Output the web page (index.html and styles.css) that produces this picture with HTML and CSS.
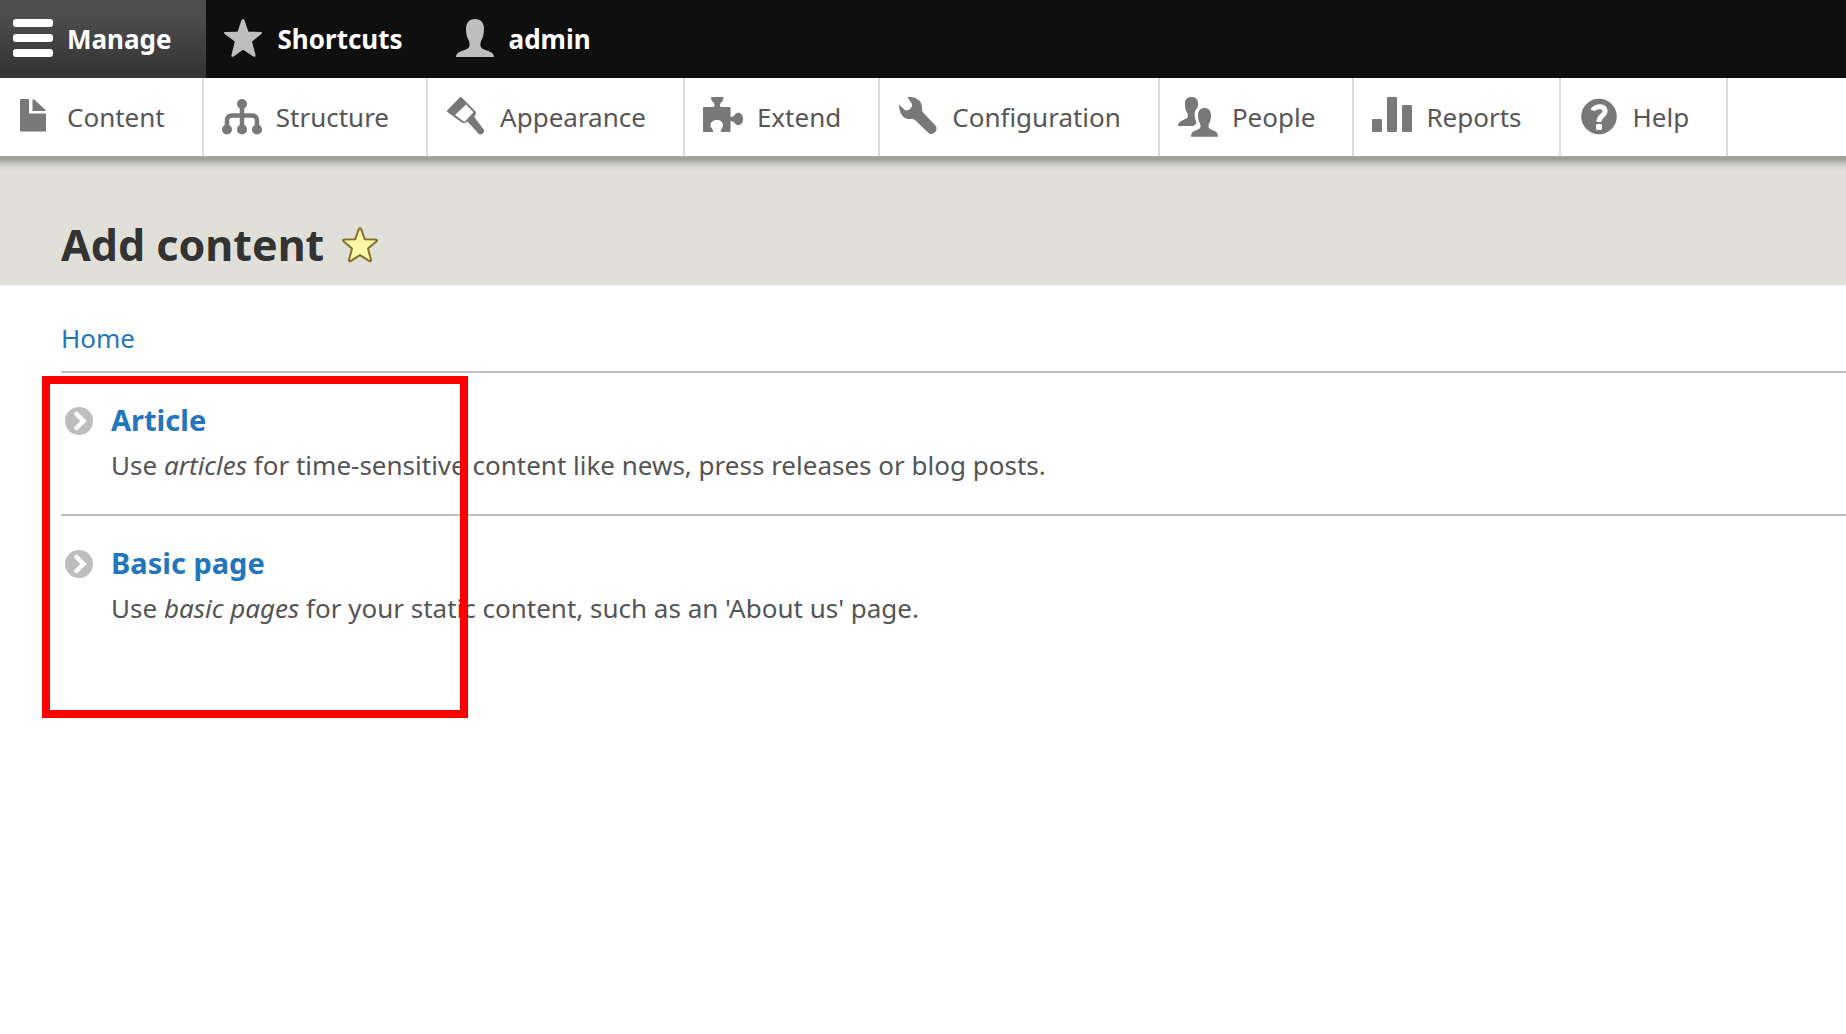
FILE: index.html
```html
<!DOCTYPE html>
<html lang="en">
<head>
<meta charset="utf-8">
<meta name="viewport" content="width=device-width, initial-scale=1">
<title>Add content</title>
<link rel="stylesheet" href="styles.css">
</head>
<body>
<nav class="toolbar-bar" aria-label="Administration toolbar">
  <a class="tab tab-first tab-active" href="#manage">
    <svg class="icon" viewBox="0 0 40 40" aria-hidden="true"><g fill="#fff"><rect y="1" width="40" height="8" rx="3"/><rect y="16" width="40" height="8" rx="3"/><rect y="31" width="40" height="8" rx="3"/></g></svg>
    <span>Manage</span>
  </a>
  <a class="tab" href="#shortcuts">
    <svg class="icon" viewBox="0 0 40 40" aria-hidden="true"><path fill="#bebebe" d="M19 1c.9 0 1.400.8 1.800 2l3.600 10.800 12.200.1c1.600 0 1.900 1.100.7 2.100L28 23.600l3.400 12.900c.5 1.900-.4 2.900-2 1.900L19 31.700l-9.400 6.700c-1.600 1-2.500 0-2-1.900L10.800 23.600 .7 16c-1.200-1-.9-2.100.7-2.100l12.200-.1L17.200 3c.4-1.200.9-2 1.800-2z"/></svg>
    <span>Shortcuts</span>
  </a>
  <a class="tab" href="#user">
    <svg class="icon" viewBox="0 0 40 40" aria-hidden="true"><path fill="#bebebe" d="M20 1c6 0 9 4 9 10 0 5-1 9-3 12-1 4-1 6 2 8 5 2 11 3 11 8H1c0-5 6-6 11-8 3-2 3-4 2-8-2-3-3-7-3-12 0-6 3-10 9-10z"/></svg>
    <span>admin</span>
  </a>
</nav>
<nav class="tray" aria-label="Administration menu">
  <a class="item item-first" href="#content">
    <svg class="icon" viewBox="0 0 40 40" aria-hidden="true"><path fill="#787878" d="M8 3h8v14.500h17V34.500a1 1 0 0 1-1 1H8a1 1 0 0 1-1-1V4a1 1 0 0 1 1-1z"/><path fill="#787878" d="M19.500 3.500v11.500h13c.5-.5.3-.8 0-1.100L21.500 3.800c-.7-.6-1.500-.8-2-.3z"/></svg>
    <span>Content</span>
  </a>
  <a class="item" href="#structure">
    <svg class="icon" viewBox="0 0 40 40" aria-hidden="true"><path fill="none" stroke="#787878" stroke-width="4.500" d="M20 8v25M5 33v-8q0-5.500 5-5.500h20q5 0 5 5.500v8"/><g fill="#787878"><circle cx="20" cy="8" r="5"/><circle cx="5" cy="33.500" r="5"/><circle cx="20" cy="33.500" r="5"/><circle cx="35" cy="33.500" r="5"/></g></svg>
    <span>Structure</span>
  </a>
  <a class="item" href="#appearance">
    <svg class="icon" viewBox="0 0 40 40" aria-hidden="true"><path fill="#787878" d="M15.500 1.200 29.500 15.500c1 1.600.4 3-1.200 5.600L38 34c1 2.500-2.500 5.500-5.200 4L21.500 25.500c-2 1.500-3.800 2-5.700 1L1.300 16c-.5-.6-.4-1.400.2-2L14 1.200c.5-.4 1-.4 1.500 0zM20 8.500 9 19l9.500 7L27.500 16.200z"/></svg>
    <span>Appearance</span>
  </a>
  <a class="item" href="#extend">
    <svg class="icon" viewBox="0 0 40 40" aria-hidden="true"><path fill="#787878" d="M8.500 1h11.500c1 1.500.5 2.500-1 4.500-2 2-2.500 3-1.500 5.500h9c.6 0 1 .4 1 1v8.500c2 .5 3 0 4.500-2 3-3.500 8-1.500 8 4.500s-5 8-8 4.500c-1.500-2-2.500-2.500-4.500-2V35c0 .6-.4 1-1 1H18c-1-3 2-3.500 2-6.500 0-3.500-2.500-5.500-6-5.500s-6.500 2-6.500 5.500c0 3 3.500 3.500 2.500 6.500H1c-.6 0-1-.4-1-1V12c0-.6.400-1 1-1h10c1-2.500.5-3.500-1.500-5.500C8 3.500 7.500 2.500 8.500 1z"/></svg>
    <span>Extend</span>
  </a>
  <a class="item" href="#configuration">
    <svg class="icon" viewBox="0 0 40 40" aria-hidden="true"><path fill="#787878" d="M9.500 1.300C15 0 24 3 24 11.500c0 2.500 0 4 1.500 5.500l12 12.500c3.500 4-2 11-7 7.500L17 24c-2-1.500-3.500-1-6-1C5 23 1 17 1 8.500l5.500 5.300c3.500 2 8-1.500 7.500-5.800z"/></svg>
    <span>Configuration</span>
  </a>
  <a class="item" href="#people">
    <svg class="icon" viewBox="0 0 40 40" aria-hidden="true"><path fill="#787878" d="M13.500 1c4.500 0 6.500 2.500 6.500 6.500 0 2 0 3.200-.7 4.500-2.500 2-3.500 6-2 11 .5 2 1.500 3 .7 5.200L15 30H0c.3-5.500 5.500-5.500 9-8 1.500-1.200.8-4-.2-6C7 13 7 11 7 7.500 7 3.500 9 1 13.500 1z"/><path fill="#787878" d="M26.500 12c4.500 0 6.500 3 6.500 7.500 0 3.500-.8 6-2 8-.7 2.500-1 4 .8 5.200C35 35 40 34.500 40 40.800H13c0-6.300 5-5.800 8.200-8.100 1.800-1.200 1.500-2.700.8-5.200-1.200-2-2-4.500-2-8 0-4.500 2-7.500 6.500-7.500z"/></svg>
    <span>People</span>
  </a>
  <a class="item" href="#reports">
    <svg class="icon" viewBox="0 0 40 40" aria-hidden="true"><g fill="#787878"><rect y="23" width="10" height="13" rx="1"/><rect x="15" y="1" width="10" height="35" rx="1"/><rect x="30" y="9" width="10" height="27" rx="1"/></g></svg>
    <span>Reports</span>
  </a>
  <a class="item" href="#help">
    <svg class="icon" viewBox="0 0 40 40" aria-hidden="true"><circle cx="20" cy="20.500" r="17.800" fill="#787878"/><path fill="none" stroke="#fff" stroke-width="5" d="M14 14.500c1-4 12-6 12 .5 0 5-6 4.500-6 11"/><rect x="17" y="28" width="6" height="6" rx="1.500" fill="#fff"/></svg>
    <span>Help</span>
  </a>
</nav>
<header class="page-header">
  <h1>Add content</h1>
  <a class="shortcut" href="#add-shortcut" aria-label="Add to shortcuts">
    <svg viewBox="0 0 36 36" aria-hidden="true"><path fill="#fdf8a5" stroke="#83702b" stroke-width="2" stroke-linejoin="round" d="M18 1.200c.6 0 1 .6 1.300 1.500l3.500 9.500 10.800.4c1.600.1 1.900 1 .7 2L26 21.400l2.900 11c.4 1.700-.5 2.400-1.900 1.500l-9-5.700-9 5.700c-1.400.9-2.300.2-1.900-1.500l2.900-11-8.300-6.800c-1.200-1-.9-1.900.7-2l10.800-.4 3.500-9.500c.3-.9.7-1.500 1.300-1.500z"/></svg>
  </a>
</header>
<main class="page">
  <nav class="breadcrumb" aria-label="Breadcrumb"><a href="#home">Home</a></nav>
  <ul class="types">
    <li>
      <svg class="bullet" viewBox="0 0 28 28" aria-hidden="true"><circle cx="14" cy="14" r="14" fill="#bebebe"/><path d="m11.500 7 7 7-7 7" fill="none" stroke="#fff" stroke-width="4.500" stroke-linecap="round"/></svg>
      <div>
        <a class="type-name" href="#article">Article</a>
        <p>Use <em>articles</em> for time-sensitive content like news, press releases or blog posts.</p>
      </div>
    </li>
    <li>
      <svg class="bullet" viewBox="0 0 28 28" aria-hidden="true"><circle cx="14" cy="14" r="14" fill="#bebebe"/><path d="m11.500 7 7 7-7 7" fill="none" stroke="#fff" stroke-width="4.500" stroke-linecap="round"/></svg>
      <div>
        <a class="type-name" href="#page">Basic page</a>
        <p>Use <em>basic pages</em> for your static content, such as an 'About us' page.</p>
      </div>
    </li>
  </ul>
  <div class="callout"></div>
</main>
</body>
</html>
```

FILE: styles.css
```css
* {
  box-sizing: border-box;
}

body {
  display: flex;
  flex-direction: column;
  min-height: 100vh;
  margin: 0;
  background: #fff;
  color: #545454;
  font-family: "Noto Sans", "Lucida Grande", sans-serif;
  font-size: 26px;
  line-height: 36px;
}

a {
  color: #2376bd;
  text-decoration: none;
}

.icon {
  flex: none;
  width: 40px;
  height: 40px;
  overflow: visible;
}

.toolbar-bar {
  display: flex;
  height: 78px;
  background: #0f0f0f;
}

.tab,
.item {
  display: flex;
  align-items: center;
  gap: 14px;
  padding: 0 36px 2px 18px;
}

.tab span,
.item span {
  padding-top: 2px;
}

.tab {
  padding-right: 34px;
  color: #fff;
  font-weight: 700;
}

.tab-first,
.item-first {
  padding-left: 13px;
}

.tab-active {
  background: linear-gradient(#4d4d4d 20%, #333);
}

.tray {
  display: flex;
  height: 80px;
  background: #fff;
  border-bottom: 2px solid #a3a3a1;
}

.item {
  padding-right: 37px;
  border-right: 2px solid #ddd;
  color: #565656;
}

.page-header {
  display: flex;
  align-items: center;
  gap: 18px;
  padding: 57px 61px 11px;
  background: linear-gradient(rgba(0, 0, 0, 0.32), rgba(0, 0, 0, 0.08) 60%, transparent) top / 100% 12px no-repeat #e0e0d8;
}

h1 {
  margin: 0;
  color: #333;
  font-size: 43px;
  line-height: 59px;
}

.shortcut,
.shortcut svg {
  display: block;
  width: 36px;
  height: 36px;
}

.page {
  position: relative;
  flex: 1;
  padding: 35px 0 0 61px;
}

.breadcrumb {
  padding-bottom: 15px;
}

.types {
  margin: 0;
  padding: 0;
  list-style: none;
}

.types li {
  display: flex;
  gap: 18px;
  height: 143px;
  padding: 29px 0 0 4px;
  border-top: 2px solid #bfbfbf;
}

.bullet {
  flex: none;
  width: 28px;
  height: 28px;
  margin-top: 5px;
}

.type-name {
  display: block;
  font-size: 29px;
  font-weight: 700;
}

.types p {
  margin: 9px 0 0;
}

.callout {
  position: absolute;
  top: 91px;
  left: 42px;
  width: 426px;
  height: 342px;
  border: 8px solid #f00;
  pointer-events: none;
}
```
